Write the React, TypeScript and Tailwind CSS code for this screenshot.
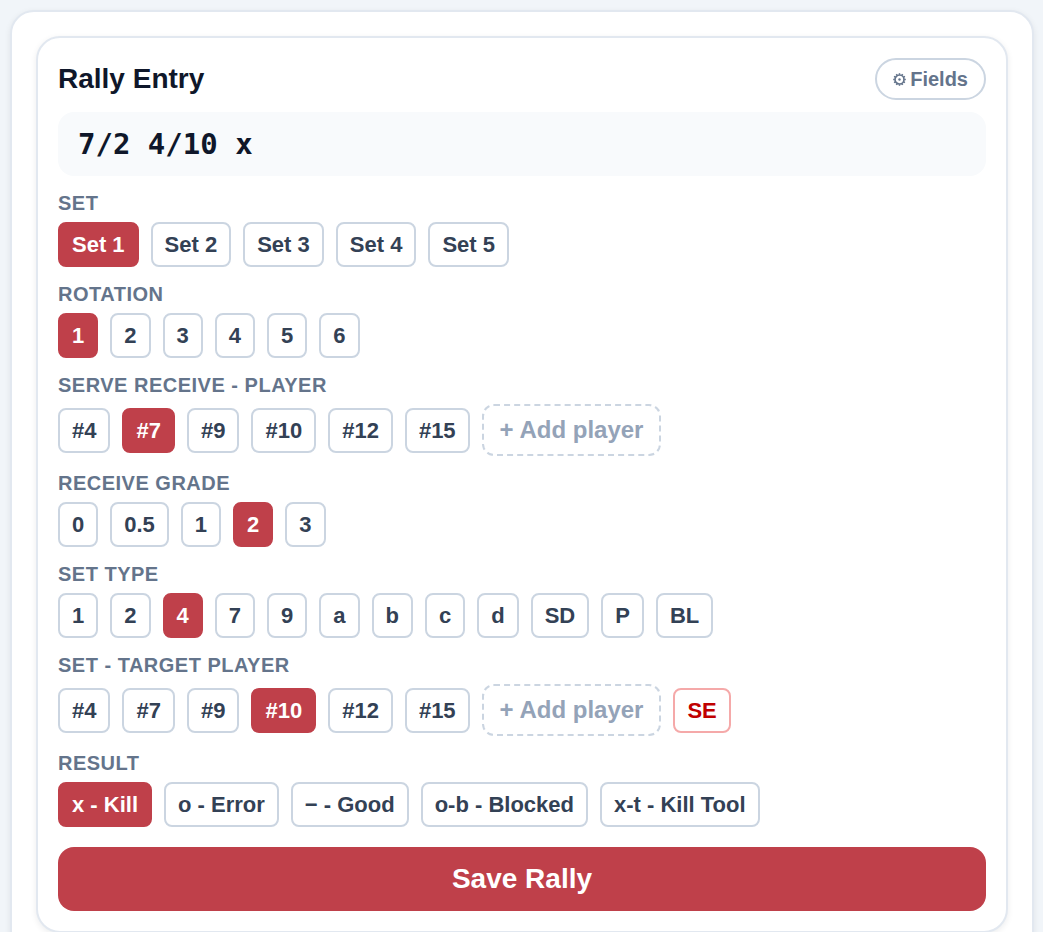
import { useState } from "react";

type Option = { value: string; label: string };
type GroupProps = {
  title: string;
  options: Option[];
  initial: string;
  addPlayer?: boolean;
  error?: string;
};

const plain = (values: string[]): Option[] => values.map((v) => ({ value: v, label: v }));

const players = plain(["#4", "#7", "#9", "#10", "#12", "#15"]);
const sets = plain(["Set 1", "Set 2", "Set 3", "Set 4", "Set 5"]);
const rotations = plain(["1", "2", "3", "4", "5", "6"]);
const grades = plain(["0", "0.5", "1", "2", "3"]);
const setTypes = plain(["1", "2", "4", "7", "9", "a", "b", "c", "d", "SD", "P", "BL"]);
const results: Option[] = [
  { value: "x", label: "x - Kill" },
  { value: "o", label: "o - Error" },
  { value: "-", label: "− - Good" },
  { value: "o-b", label: "o-b - Blocked" },
  { value: "x-t", label: "x-t - Kill Tool" },
];

const chip = "rounded-lg border-2 px-3 py-2 text-[22px] leading-[25px] font-bold";

function ChipGroup({ title, options, initial, addPlayer, error }: GroupProps) {
  const [selected, setSelected] = useState(initial);
  return (
    <section aria-label={title}>
      <h2 className="mb-2 text-xl leading-[22px] font-bold tracking-wide text-[#64748b] uppercase">
        {title}
      </h2>
      <div className="flex flex-wrap items-center gap-3">
        {options.map((o) => (
          <button
            key={o.value}
            type="button"
            aria-pressed={selected === o.value}
            onClick={() => setSelected(o.value)}
            className={`${chip} ${
              selected === o.value
                ? "border-[#bf404a] bg-[#bf404a] text-white"
                : "border-[#cbd5e1] bg-white text-[#334155]"
            }`}
          >
            {o.label}
          </button>
        ))}
        {addPlayer && (
          <button
            type="button"
            className="rounded-xl border-2 border-dashed border-[#cbd5e1] px-4 py-2.5 text-2xl leading-7 font-bold text-[#94a3b8]"
          >
            + Add player
          </button>
        )}
        {error && (
          <button type="button" className={`${chip} border-[#f5a9a9] bg-white text-[#c00000]`}>
            {error}
          </button>
        )}
      </div>
    </section>
  );
}

const teeth = [0, 30, 60, 90, 120, 150, 180, 210, 240, 270, 300, 330];

function GearIcon() {
  return (
    <svg width="13" height="13" viewBox="0 0 13 13" fill="none" stroke="currentColor" aria-hidden="true">
      <circle cx="6.5" cy="6.5" r="4.5" strokeWidth="1.7" />
      {teeth.map((angle) => (
        <path key={angle} d="M6.5 0.2V1.8" strokeWidth="1.5" transform={`rotate(${angle} 6.5 6.5)`} />
      ))}
      <circle cx="6.5" cy="6.5" r="1.2" fill="currentColor" stroke="none" />
    </svg>
  );
}

export default function App() {
  return (
    <main className="min-h-screen bg-[#f1f5f9] pt-2.5 pr-[9px] pl-2.5 font-['Liberation_Sans',Arial,sans-serif]">
      <div className="rounded-[24px] border-2 border-[#e2e8f0] bg-white p-6 shadow-[0_2px_6px_rgba(15,23,42,0.08)]">
        <div className="flex flex-col gap-4 rounded-[24px] border-2 border-[#e2e8f0] bg-white p-5 shadow-[0_2px_6px_rgba(15,23,42,0.08)]">
          <div className="flex flex-col gap-3">
            <header className="flex items-center justify-between">
              <h1 className="text-[28px] leading-8 font-bold text-[#0f172a]">Rally Entry</h1>
              <button
                type="button"
                className="flex items-center gap-1 rounded-full border-2 border-[#cbd5e1] bg-white px-4 py-2 text-xl leading-[22px] font-bold text-[#64748b]"
              >
                <GearIcon />
                Fields
              </button>
            </header>
            <output className="block rounded-2xl bg-[#f8fafc] px-5 py-4 font-['DejaVu_Sans_Mono',monospace] text-[29px] leading-8 font-bold text-[#0f172a]">
              7/2 4/10 x
            </output>
          </div>
          <ChipGroup title="Set" options={sets} initial="Set 1" />
          <ChipGroup title="Rotation" options={rotations} initial="1" />
          <ChipGroup title="Serve Receive - Player" options={players} initial="#7" addPlayer />
          <ChipGroup title="Receive Grade" options={grades} initial="2" />
          <ChipGroup title="Set Type" options={setTypes} initial="4" />
          <ChipGroup title="Set - Target Player" options={players} initial="#10" addPlayer error="SE" />
          <ChipGroup title="Result" options={results} initial="x" />
          <button
            type="button"
            className="mt-1 rounded-2xl bg-[#bf404a] py-4 text-[28px] leading-8 font-bold text-white"
          >
            Save Rally
          </button>
        </div>
      </div>
    </main>
  );
}
